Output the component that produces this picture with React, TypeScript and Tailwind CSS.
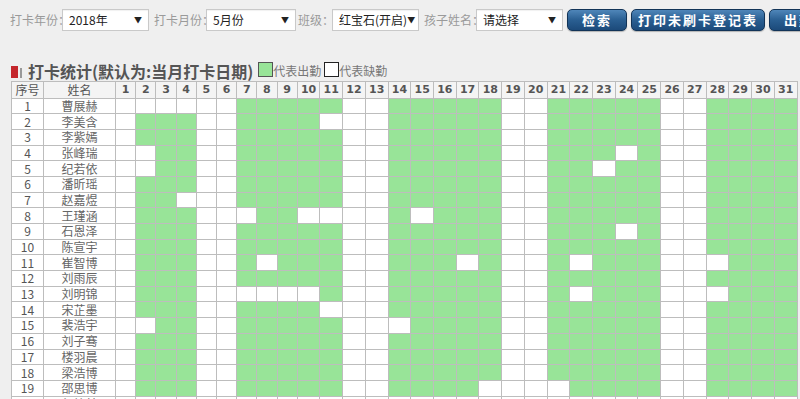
import React from "react";

const WORK = new Set([2, 3, 4, 7, 8, 9, 10, 11, 14, 15, 16, 17, 18, 21, 22, 23, 24, 25, 28, 29, 30, 31]);

const NAMES = [
  "曹展赫", "李美含", "李紫嫣", "张峰瑞", "纪若依", "潘昕瑶", "赵嘉煜", "王瑾涵", "石恩泽", "陈宣宇",
  "崔智博", "刘雨辰", "刘明锦", "宋芷墨", "裴浩宇", "刘子骞", "楼羽晨", "梁浩博", "邵思博", "郭梓林",
];

const ABSENT: Record<number, number[]> = {
  1: [2, 3, 4],
  2: [11],
  4: [2, 24],
  5: [2, 23],
  7: [4],
  8: [7, 10, 11, 15],
  9: [24],
  11: [8, 17, 22, 28],
  13: [7, 8, 9, 10, 22, 28],
  14: [11],
  15: [2, 14],
  19: [18, 21],
};

const DAYS = Array.from({ length: 31 }, (_, i) => i + 1);

function FakeSelect({ value, width }: { value: string; width: string }) {
  return (
    <div
      className={`${width} h-[22px] shrink-0 bg-white border border-[#c9c9c9] flex items-center justify-between pl-[6px] pr-[6px] shadow-[inset_0_1px_1px_rgba(0,0,0,0.06)]`}
    >
      <span className="text-[12px] text-[#222] leading-none">{value}</span>
      <span className="text-[8px] text-[#222] leading-none">▼</span>
    </div>
  );
}

function Btn({ label, width }: { label: string; width: string }) {
  return (
    <div
      className={`${width} h-[22px] shrink-0 rounded-[5px] border border-[#123458] bg-gradient-to-b from-[#4f86b9] via-[#2a5f92] to-[#1c4a7a] flex items-center justify-center text-white text-[13px] font-bold tracking-[2px] shadow-[0_1px_1px_rgba(0,0,0,0.25)]`}
    >
      {label}
    </div>
  );
}

function Label({ text, cls }: { text: string; cls: string }) {
  return <span className={`shrink-0 text-[12px] text-[#9a9a9a] ${cls}`}>{text}</span>;
}

export default function App() {
  return (
    <div
      className="w-[800px] h-[399px] overflow-hidden bg-[#efefef]"
      style={{ fontFamily: '"Noto Sans CJK SC", "Noto Sans", sans-serif' }}
    >
      {/* top bar */}
      <div className="flex items-center pt-[9px] pl-[10px] whitespace-nowrap">
        <Label text="打卡年份：" cls="w-[52px]" />
        <FakeSelect value="2018年" width="w-[87px]" />
        <Label text="打卡月份：" cls="ml-[5px] w-[52px]" />
        <FakeSelect value="5月份" width="w-[90px]" />
        <Label text="班级：" cls="ml-[2px] w-[34px]" />
        <FakeSelect value="红宝石(开启)" width="w-[87px]" />
        <Label text="孩子姓名：" cls="ml-[5px] w-[52px]" />
        <FakeSelect value="请选择" width="w-[87px]" />
        <div className="ml-[4px] flex gap-[4px] shrink-0">
          <Btn label="检索" width="w-[60px]" />
          <Btn label="打印未刷卡登记表" width="w-[134px]" />
          <Btn label="出勤统计" width="w-[90px]" />
        </div>
      </div>

      {/* title */}
      <div className="flex items-center mt-[30px] pl-[11px] h-[19px]">
        <div className="w-[7px] h-[12px] bg-[#c4262c] mt-[3px]" />
        <div className="w-[2px] h-[10px] bg-[#999] ml-[2px] mt-[4px]" />
        <span className="ml-[6px] text-[16px] font-bold text-[#555] leading-none">
          打卡统计(默认为:当月打卡日期)
        </span>
        <div className="ml-[5px] w-[15px] h-[15px] bg-[#98e498] border border-[#555] -mt-[2px]" />
        <span className="text-[12px] text-[#777] leading-none">代表出勤</span>
        <div className="ml-[3px] w-[15px] h-[15px] bg-white border border-[#222] -mt-[2px]" />
        <span className="text-[12px] text-[#777] leading-none">代表缺勤</span>
      </div>

      {/* table */}
      <div className="mt-[1px] ml-[11px] w-max bg-[#bdbdbd] p-px grid gap-px grid-cols-[31px_71px_repeat(9,19.2px)_repeat(22,21.73px)] grid-rows-[15.5px_repeat(20,14.7px)]">
        <div className="bg-[#f4f4f4] flex items-center justify-center text-[12px] text-[#555] leading-none">序号</div>
        <div className="bg-[#f4f4f4] flex items-center justify-center text-[12px] text-[#555] leading-none">姓名</div>
        {DAYS.map((d) => (
          <div
            key={d}
            className="bg-[#f4f4f4] flex items-center justify-center text-[11px] font-bold text-[#555] leading-none"
            style={{ fontFamily: '"DejaVu Sans", sans-serif' }}
          >
            {d}
          </div>
        ))}
        {NAMES.map((name, idx) => {
          const row = idx + 1;
          const absent = ABSENT[row] || [];
          return (
            <React.Fragment key={row}>
              <div className="bg-white flex items-center justify-center text-[12px] text-[#555] leading-none">{row}</div>
              <div className="bg-white flex items-center justify-center text-[12px] text-[#666] leading-none">{name}</div>
              {DAYS.map((d) => {
                const green = row !== 20 && WORK.has(d) && !absent.includes(d);
                return <div key={d} className={green ? "bg-[#98e498]" : "bg-white"} />;
              })}
            </React.Fragment>
          );
        })}
      </div>
    </div>
  );
}
